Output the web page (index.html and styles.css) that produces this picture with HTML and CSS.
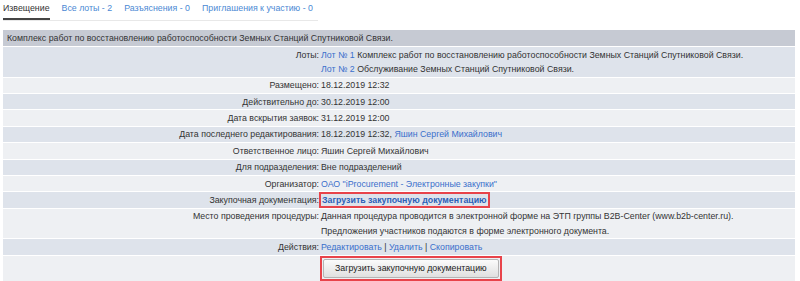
FILE: index.html
```html
<!DOCTYPE html>
<html lang="ru">
<head>
<meta charset="utf-8">
<title>Извещение</title>
<link rel="stylesheet" href="styles.css">
</head>
<body>
<div class="page">
  <nav class="tabs">
    <a class="tab active">Извещение</a>
    <a class="tab">Все лоты - 2</a>
    <a class="tab">Разъяснения - 0</a>
    <a class="tab">Приглашения к участию - 0</a>
  </nav>
  <table class="info">
    <tr class="head"><td colspan="2">Комплекс работ по восстановлению работоспособности Земных Станций Спутниковой Связи.</td></tr>
    <tr class="dark"><td class="lbl">Лоты:</td><td class="val"><a class="lnk">Лот № 1</a> Комплекс работ по восстановлению работоспособности Земных Станций Спутниковой Связи.<br><a class="lnk">Лот № 2</a> Обслуживание Земных Станций Спутниковой Связи.</td></tr>
    <tr class="light"><td class="lbl">Размещено:</td><td class="val">18.12.2019 12:32</td></tr>
    <tr class="dark"><td class="lbl">Действительно до:</td><td class="val">30.12.2019 12:00</td></tr>
    <tr class="light"><td class="lbl">Дата вскрытия заявок:</td><td class="val">31.12.2019 12:00</td></tr>
    <tr class="dark"><td class="lbl">Дата последнего редактирования:</td><td class="val">18.12.2019 12:32, <a class="lnk">Яшин Сергей Михайлович</a></td></tr>
    <tr class="light"><td class="lbl">Ответственное лицо:</td><td class="val">Яшин Сергей Михайлович</td></tr>
    <tr class="dark"><td class="lbl">Для подразделения:</td><td class="val">Вне подразделений</td></tr>
    <tr class="light"><td class="lbl">Организатор:</td><td class="val"><a class="lnk">ОАО "iProcurement - Электронные закупки"</a></td></tr>
    <tr class="dark"><td class="lbl">Закупочная документация:</td><td class="val"><span class="mark"><a class="lnk bold">Загрузить закупочную документацию</a></span></td></tr>
    <tr class="light"><td class="lbl">Место проведения процедуры:</td><td class="val">Данная процедура проводится в электронной форме на ЭТП группы B2B-Center (www.b2b-center.ru).<br>Предложения участников подаются в форме электронного документа.</td></tr>
    <tr class="dark"><td class="lbl">Действия:</td><td class="val"><a class="lnk">Редактировать</a> | <a class="lnk">Удалить</a> | <a class="lnk">Скопировать</a></td></tr>
    <tr class="light"><td class="lbl"></td><td class="val btncell"><span class="markbtn"><button class="btn">Загрузить закупочную документацию</button></span></td></tr>
  </table>
</div>
</body>
</html>
```

FILE: styles.css
```css
html, body {
  margin: 0;
  padding: 0;
  background: #fff;
}
.page {
  padding: 0 5px 0 3px;
  font-family: "Liberation Sans", Arial, sans-serif;
  font-size: 8.8px;
  color: #333;
}
.tabs {
  display: flex;
  gap: 12px;
  width: 315px;
  height: 20px;
  border-bottom: 1px solid #e8e8e8;
  line-height: 16px;
}
.tab {
  color: #4b89d4;
  text-decoration: none;
  height: 18px;
  white-space: nowrap;
}
.tab.active {
  color: #333;
  border-bottom: 2px solid #444;
}
.info {
  margin-top: 8px;
  width: 100%;
  border-collapse: separate;
  border-spacing: 0 1px;
  line-height: 14.3px;
}
.info td {
  padding: 0.55px 1px;
  vertical-align: top;
}
.head td {
  background: #c6cad3;
  padding: 0.85px 4px;
}
.dark td { background: #dee3eb; }
.light td { background: #eef0f3; }
.lbl {
  width: 315px;
  text-align: right;
  white-space: nowrap;
}
.lnk {
  color: #3a6fcb;
  text-decoration: none;
}
.bold {
  font-weight: bold;
  color: #2c5fb8;
}
.mark {
  display: inline-block;
  border: 2px solid #e8434a;
  margin: -1px 0 -1px -2px;
  padding: 0 1px;
  line-height: 12px;
}
.btncell {
  padding-top: 0;
  padding-bottom: 0;
}
.markbtn {
  display: inline-block;
  border: 2px solid #e8434a;
  padding: 1px;
  margin: 0 0 0 -1px;
  line-height: 0;
}
.btn {
  font-family: inherit;
  font-size: 8.8px;
  color: #222;
  padding: 2px 11px;
  margin: 0;
  border: 1px solid #b4b4b4;
  border-radius: 2px;
  background: linear-gradient(#fbfbfb, #e0e0e0);
  line-height: 13px;
}
```
